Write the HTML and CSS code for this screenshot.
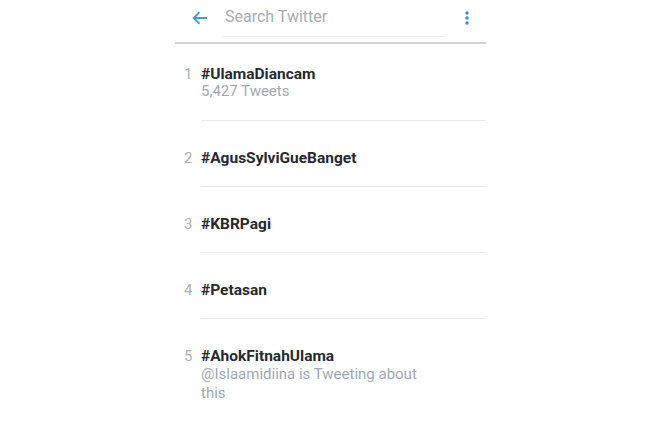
FILE: index.html
```html
<!DOCTYPE html>
<html>
<head>
<meta charset="utf-8">
<link rel="stylesheet" href="styles.css">
</head>
<body>
<div class="screen">
  <header class="topbar">
    <svg class="back" width="16" height="14" viewBox="0 0 16 14"><path d="M15 7H2M7.5 1.2L1.7 7l5.8 5.8" fill="none" stroke="#3d9be0" stroke-width="1.9"/></svg>
    <div class="search"><span>Search Twitter</span></div>
    <svg class="more" width="4" height="14" viewBox="0 0 4 14"><circle cx="2" cy="2" r="1.7" fill="#2b8fd8"/><circle cx="2" cy="7" r="1.7" fill="#2b8fd8"/><circle cx="2" cy="12" r="1.7" fill="#2b8fd8"/></svg>
  </header>
  <ol class="trends">
    <li class="trend first">
      <span class="num">1</span>
      <div class="body"><div class="tag">#UlamaDiancam</div><div class="sub">5,427 Tweets</div></div>
    </li>
    <li class="trend">
      <span class="num">2</span>
      <div class="body"><div class="tag">#AgusSylviGueBanget</div></div>
    </li>
    <li class="trend">
      <span class="num">3</span>
      <div class="body"><div class="tag">#KBRPagi</div></div>
    </li>
    <li class="trend">
      <span class="num">4</span>
      <div class="body"><div class="tag">#Petasan</div></div>
    </li>
    <li class="trend">
      <span class="num">5</span>
      <div class="body"><div class="tag">#AhokFitnahUlama</div><div class="sub narrow">@Islaamidiina is Tweeting about this</div></div>
    </li>
  </ol>
</div>
</body>
</html>
```
FILE: styles.css
```css
html, body { margin: 0; padding: 0; background: #fff; }
body { font-family: Roboto, "Noto Sans", sans-serif; }
.screen { width: 311px; margin-left: 175px; }
.topbar {
  height: 42px;
  display: flex;
  align-items: flex-start;
  border-bottom: 2px solid #d4d4d4;
}
.back { margin: 11px 0 0 17px; flex: none; }
.search {
  margin-left: 14px;
  width: 222px;
  height: 37px;
  border-bottom: 1px solid #ececec;
  box-sizing: border-box;
  padding: 7px 0 0 3px;
  font-size: 16px;
  line-height: 20px;
  color: #a4adb5;
}
.more { margin: 11px 0 0 21px; flex: none; }
.trends { list-style: none; margin: 0; padding: 0; }
.trend { display: flex; padding-top: 28px; }
.trend.first { padding-top: 21px; }
.num {
  width: 26px;
  box-sizing: border-box;
  padding-left: 9px;
  font-size: 15px;
  line-height: 18px;
  color: #a9b1b8;
  flex: none;
}
.body {
  flex: 1;
  padding-bottom: 19px;
  border-bottom: 1px solid #e8eaec;
}
.trend.first .body { padding-bottom: 20px; }
.tag {
  font-size: 15.5px;
  line-height: 18px;
  font-weight: 700;
  color: #262a2e;
}
.sub {
  font-size: 15px;
  line-height: 17px;
  color: #a0a8b0;
}
.sub.narrow { width: 220px; line-height: 19px; }
```
